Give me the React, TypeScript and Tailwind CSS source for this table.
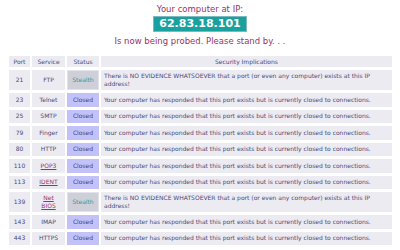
import React from "react"

type Port = {
  port: number
  service: string
  link?: boolean
  stealth?: boolean
}

const ports: Port[] = [
  { port: 21, service: "FTP", stealth: true },
  { port: 23, service: "Telnet" },
  { port: 25, service: "SMTP" },
  { port: 79, service: "Finger" },
  { port: 80, service: "HTTP" },
  { port: 110, service: "POP3", link: true },
  { port: 113, service: "IDENT", link: true },
  { port: 139, service: "Net BIOS", link: true, stealth: true },
  { port: 143, service: "IMAP" },
  { port: 443, service: "HTTPS" },
]

const CLOSED_MSG =
  "Your computer has responded that this port exists but is currently closed to connections."
const STEALTH_MSG =
  "There is NO EVIDENCE WHATSOEVER that a port (or even any computer) exists at this IP address!"

const cell = "bg-[#ecebf1] flex items-center justify-center"

export default function App() {
  return (
    <div
      className="w-[400px] h-[250px] bg-white overflow-hidden text-[#4a4a78]"
      style={{ fontFamily: '"DejaVu Sans", Verdana, sans-serif' }}
    >
      <div className="flex flex-col items-center pt-[4px]">
        <div className="text-[8.5px] leading-[10px] text-[#993366]">Your computer at IP:</div>
        <div className="mt-[2px] h-[16px] w-[94px] flex items-center justify-center bg-[#19a19f] border border-[#7fb9c0] text-white font-bold text-[11px] leading-[14px]">
          62.83.18.101
        </div>
        <div className="mt-[4px] text-[8.5px] leading-[10px] text-[#993366]">
          Is now being probed. Please stand by. . .
        </div>
      </div>

      <div className="mt-[10px] ml-[9px] w-[383px] grid grid-cols-[21px_33px_32px_1fr] gap-x-[2px] gap-y-[3px] text-[6px] leading-[8px]">
        <div className={`${cell} h-[11px]`}>Port</div>
        <div className={`${cell} h-[11px]`}>Service</div>
        <div className={`${cell} h-[11px]`}>Status</div>
        <div className={`${cell} h-[11px]`}>Security Implications</div>

        {ports.map((p) => {
          const tall = p.stealth ? "h-[20px]" : "h-[13.5px]"
          return (
            <React.Fragment key={p.port}>
              <div className={`${cell} ${tall}`}>{p.port}</div>
              <div className={`${cell} ${tall} text-center`}>
                {p.link ? (
                  <span className="underline text-[#993366] px-[4px]">{p.service}</span>
                ) : (
                  p.service
                )}
              </div>
              {p.stealth ? (
                <div className={`${tall} flex items-center justify-center bg-[#cfcfd9] border border-[#e2e2ea] text-[#1a9f9f]`}>
                  Stealth
                </div>
              ) : (
                <div className={`${tall} flex items-center justify-center bg-[#c2c2f8] text-[#44447a]`}>
                  Closed
                </div>
              )}
              <div className={`${tall} bg-[#ecebf1] flex items-center pl-[3px] pr-[6px]`}>
                {p.stealth ? STEALTH_MSG : CLOSED_MSG}
              </div>
            </React.Fragment>
          )
        })}
      </div>
    </div>
  )
}
